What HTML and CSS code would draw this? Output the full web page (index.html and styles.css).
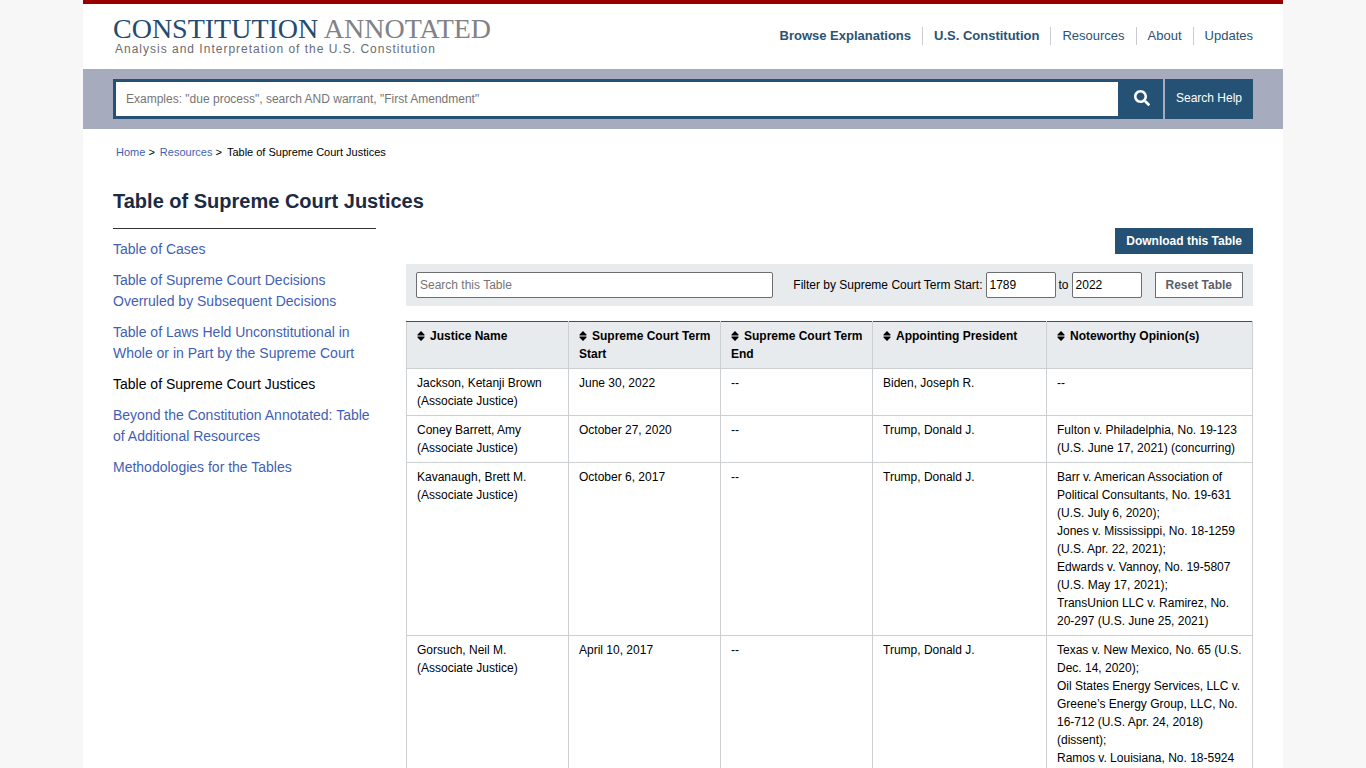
FILE: index.html
```html
<!DOCTYPE html>
<html lang="en">
<head>
<meta charset="utf-8">
<meta name="viewport" content="width=device-width, initial-scale=1">
<title>Table of Supreme Court Justices | Constitution Annotated</title>
<link rel="stylesheet" href="styles.css">
</head>
<body>
<div class="page">
  <header class="masthead">
    <a class="brand" href="#">
      <span class="brand-name">CONSTITUTION <span class="brand-second">ANNOTATED</span></span>
      <span class="brand-tagline">Analysis and Interpretation of the U.S. Constitution</span>
    </a>
    <nav class="main-nav" aria-label="Main">
      <a class="nav-link nav-strong" href="#">Browse Explanations</a>
      <a class="nav-link nav-strong" href="#">U.S. Constitution</a>
      <a class="nav-link" href="#">Resources</a>
      <a class="nav-link" href="#">About</a>
      <a class="nav-link" href="#">Updates</a>
    </nav>
  </header>

  <form class="site-search" role="search">
    <input class="search-input" type="search" aria-label="Search the Constitution Annotated" placeholder="Examples: &quot;due process&quot;, search AND warrant, &quot;First Amendment&quot;">
    <button class="search-button" type="button" aria-label="Search">
      <svg class="search-icon" viewBox="0 0 512 512" aria-hidden="true"><path fill="currentColor" d="M505 442.700 405.300 343c-4.500-4.500-10.600-7-17-7H372c27.600-35.300 44-79.700 44-128C416 93.100 322.900 0 208 0S0 93.100 0 208s93.100 208 208 208c48.300 0 92.700-16.400 128-44v16.300c0 6.400 2.500 12.500 7 17l99.700 99.700c9.400 9.400 24.600 9.400 33.900 0l28.300-28.300c9.400-9.400 9.400-24.600.1-34zM208 336c-70.700 0-128-57.200-128-128 0-70.700 57.200-128 128-128 70.700 0 128 57.200 128 128 0 70.700-57.200 128-128 128z"/></svg>
    </button>
    <a class="search-help" href="#">Search Help</a>
  </form>

  <nav class="breadcrumbs" aria-label="Breadcrumb">
    <span><a href="#">Home</a> &gt;</span>
    <span><a href="#">Resources</a> &gt;</span>
    <span>Table of Supreme Court Justices</span>
  </nav>

  <h1 class="title">Table of Supreme Court Justices</h1>

  <div class="columns">
    <nav class="side-nav" aria-label="Resources">
      <a href="#">Table of Cases</a>
      <a href="#">Table of Supreme Court Decisions Overruled by Subsequent Decisions</a>
      <a href="#">Table of Laws Held Unconstitutional in Whole or in Part by the Supreme Court</a>
      <a class="current" href="#" aria-current="page">Table of Supreme Court Justices</a>
      <a href="#">Beyond the Constitution Annotated: Table of Additional Resources</a>
      <a href="#">Methodologies for the Tables</a>
    </nav>

    <main class="content">
      <button class="download" type="button">Download this Table</button>
      <form class="filters">
        <input class="field table-search" type="text" aria-label="Search this Table" placeholder="Search this Table">
        <div class="term-range">
          <label for="term-from">Filter by Supreme Court Term Start:</label>
          <input class="field year" id="term-from" type="text" value="1789">
          <label for="term-to">to</label>
          <input class="field year" id="term-to" type="text" value="2022">
        </div>
        <button class="reset" type="button">Reset Table</button>
      </form>

      <table class="justices">
        <colgroup>
          <col class="col-name"><col class="col-date"><col class="col-date"><col class="col-president"><col class="col-opinions">
        </colgroup>
        <thead>
          <tr>
            <th scope="col"><svg class="sort" viewBox="0 0 8 10" aria-hidden="true"><path d="M4 0l3.500 3.400v1h-7v-1zM.5 5.600h7v1L4 10 .5 6.600z"/></svg>Justice Name</th>
            <th scope="col"><svg class="sort" viewBox="0 0 8 10" aria-hidden="true"><path d="M4 0l3.500 3.400v1h-7v-1zM.5 5.600h7v1L4 10 .5 6.600z"/></svg>Supreme Court Term Start</th>
            <th scope="col"><svg class="sort" viewBox="0 0 8 10" aria-hidden="true"><path d="M4 0l3.500 3.400v1h-7v-1zM.5 5.600h7v1L4 10 .5 6.600z"/></svg>Supreme Court Term End</th>
            <th scope="col"><svg class="sort" viewBox="0 0 8 10" aria-hidden="true"><path d="M4 0l3.500 3.400v1h-7v-1zM.5 5.600h7v1L4 10 .5 6.600z"/></svg>Appointing President</th>
            <th scope="col"><svg class="sort" viewBox="0 0 8 10" aria-hidden="true"><path d="M4 0l3.500 3.400v1h-7v-1zM.5 5.600h7v1L4 10 .5 6.600z"/></svg>Noteworthy Opinion(s)</th>
          </tr>
        </thead>
        <tbody>
          <tr>
            <td>Jackson, Ketanji Brown (Associate Justice)</td>
            <td>June 30, 2022</td><td>--</td><td>Biden, Joseph R.</td><td>--</td>
          </tr>
          <tr>
            <td>Coney Barrett, Amy (Associate Justice)</td>
            <td>October 27, 2020</td><td>--</td><td>Trump, Donald J.</td>
            <td>Fulton v. Philadelphia, No. 19-123 (U.S. June 17, 2021) (concurring)</td>
          </tr>
          <tr>
            <td>Kavanaugh, Brett M. (Associate Justice)</td>
            <td>October 6, 2017</td><td>--</td><td>Trump, Donald J.</td>
            <td>Barr v. American Association of Political Consultants, No. 19-631 (U.S. July 6, 2020);<br>Jones v. Mississippi, No. 18-1259 (U.S. Apr. 22, 2021);<br>Edwards v. Vannoy, No. 19-5807 (U.S. May 17, 2021);<br>TransUnion LLC v. Ramirez, No. 20-297 (U.S. June 25, 2021)</td>
          </tr>
          <tr>
            <td>Gorsuch, Neil M.<br>(Associate Justice)</td>
            <td>April 10, 2017</td><td>--</td><td>Trump, Donald J.</td>
            <td>Texas v. New Mexico, No. 65 (U.S. Dec. 14, 2020);<br>Oil States Energy Services, LLC v. Greene’s Energy Group, LLC, No. 16-712 (U.S. Apr. 24, 2018) (dissent);<br>Ramos v. Louisiana, No. 18-5924</td>
          </tr>
        </tbody>
      </table>
    </main>
  </div>
</div>
</body>
</html>
```

FILE: styles.css
```css
* { box-sizing: border-box; }

body {
  margin: 0;
  background: #f7f7f7;
  color: #000;
  font: 12px/18px "Liberation Sans", Arial, sans-serif;
}

a { color: #3f5fb4; text-decoration: none; }
a:hover { text-decoration: underline; }

input, button { font: inherit; }

.page {
  max-width: 1200px;
  min-height: 100vh;
  margin: 0 auto;
  background: #fff;
  border-top: 4px solid #990000;
}

/* Masthead */
.masthead {
  display: flex;
  justify-content: space-between;
  align-items: center;
  padding: 12px 30px 13px;
}

.brand { display: flex; flex-direction: column; }
.brand:hover { text-decoration: none; }

.brand-name {
  color: #254b6e;
  font: 28px/26px "Liberation Serif", "Times New Roman", serif;
}

.brand-second { color: #808287; }

.brand-tagline {
  padding-left: 2px;
  color: #6b6c70;
  font-size: 12px;
  line-height: 14px;
  letter-spacing: 1px;
}

.main-nav { display: flex; font-size: 13px; }

.nav-link {
  padding: 0 11px;
  border-left: 1px solid #c8ccd2;
  color: #2b5273;
}
.nav-link:first-child { border-left: 0; }
.nav-link:last-child { padding-right: 0; }
.nav-strong { font-weight: bold; }

/* Site search */
.site-search {
  display: flex;
  padding: 10px 30px;
  background: #a6acbe;
}

.search-input {
  flex: 1;
  min-width: 0;
  height: 40px;
  padding: 0 10px;
  border: 3px solid #255174;
  border-right: 0;
  border-radius: 0;
  background: #fff;
  appearance: none;
}
.search-input::placeholder, .field::placeholder { color: #757575; opacity: 1; }

.search-button, .search-help {
  display: flex;
  align-items: center;
  justify-content: center;
  height: 40px;
  border: 0;
  background: #255174;
  color: #fff;
}
.search-button { width: 45px; padding: 0 0 2px 4px; }
.search-icon { width: 16px; height: 16px; }
.search-help { margin-left: 2px; padding: 0 11px 2px; }

/* Page heading */
.breadcrumbs {
  display: flex;
  gap: 5px;
  padding: 14px 33px;
  font-size: 11px;
}

.title {
  margin: 0;
  padding: 14px 30px;
  color: #1d2a42;
  font-size: 20px;
  line-height: 24px;
}

.columns {
  display: flex;
  align-items: flex-start;
  gap: 30px;
  padding: 1px 30px 30px;
}

.side-nav {
  display: flex;
  flex-direction: column;
  flex: 0 0 263px;
  gap: 10px;
  padding-top: 10px;
  border-top: 1px solid #333;
  font-size: 14px;
  line-height: 21px;
}
.side-nav .current { color: #000; }

/* Table tools */
.content {
  display: flex;
  flex-direction: column;
  flex: 1;
  min-width: 0;
}

.download {
  align-self: flex-end;
  height: 26px;
  padding: 0 11px;
  border: 0;
  background: #255174;
  color: #fff;
  font-weight: bold;
}

.filters {
  display: flex;
  align-items: center;
  margin: 10px 0 15px;
  padding: 8px 10px;
  background: #e8ebee;
}

.field {
  height: 26px;
  padding: 0 3px;
  border: 1px solid #6d6d72;
  border-radius: 2px;
  background: #fff;
}
.table-search { flex: 1; min-width: 0; }

.term-range {
  display: flex;
  align-items: center;
  gap: 3px;
  margin: 0 13px 0 20px;
}
.year { width: 70px; }

.reset {
  height: 26px;
  padding: 0 10px;
  border: 1px solid #6d6d72;
  background: #fff;
  color: #5b6067;
  font-weight: bold;
}

/* Justices table */
.justices {
  width: 100%;
  table-layout: fixed;
  border-collapse: collapse;
}
.col-name { width: 162px; }
.col-date { width: 152px; }
.col-president { width: 174px; }

.justices th, .justices td {
  padding: 5px 10px;
  border: 1px solid #cdd0d3;
  text-align: left;
  vertical-align: top;
}
.justices th {
  padding-right: 8px;
  border-top-color: #3c4f63;
  background: #e8ebee;
}

.sort {
  width: 8px;
  height: 10px;
  margin-right: 5px;
  vertical-align: -1px;
}
```
